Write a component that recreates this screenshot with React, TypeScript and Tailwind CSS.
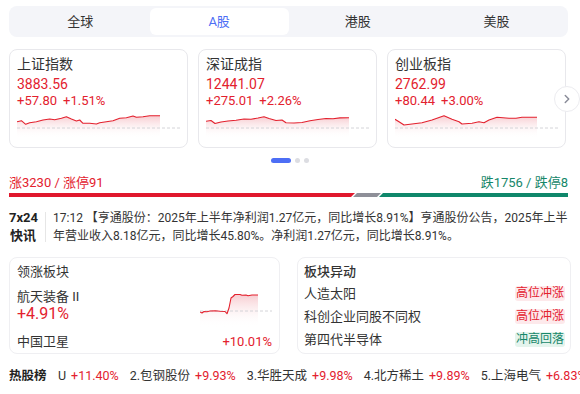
import { useId } from "react";
import { ChevronRight } from "lucide-react";

type Pt = [number, number];

const tabs = ["全球", "A股", "港股", "美股"];

const indices: { name: string; value: string; chg: string; pct: string; pts: Pt[] }[] = [
  {
    name: "上证指数",
    value: "3883.56",
    chg: "+57.80",
    pct: "+1.51%",
    pts: [
      [0, 7.7], [4.4, 6.7], [8.7, 10.3], [12.7, 8.7], [19.4, 7.7], [26, 6], [32.7, 5], [37.7, 5.7],
      [44.4, 4.3], [49.4, 2.7], [54.4, 5], [59.4, 7], [62.7, 6], [66, 9.3], [72.7, 9.3], [79.4, 10],
      [82.7, 8.7], [89.4, 7.7], [96, 6.7], [102.7, 4.3], [109.4, 3.7], [116, 2], [119.4, 3.3],
      [126, 2.7], [132.7, 1.7], [143, 1.7],
    ],
  },
  {
    name: "深证成指",
    value: "12441.07",
    chg: "+275.01",
    pct: "+2.26%",
    pts: [
      [0, 7.3], [5, 6.5], [9, 9.5], [15, 8], [22, 7], [30, 6.3], [38, 5], [45, 5.2], [52, 4],
      [58, 2.8], [63, 4.5], [70, 6.5], [76, 6], [80, 8.8], [88, 9], [96, 8.5], [104, 6.8],
      [112, 5.5], [120, 4.5], [127, 4.8], [134, 3.9], [143, 3.8],
    ],
  },
  {
    name: "创业板指",
    value: "2762.99",
    chg: "+80.44",
    pct: "+3.00%",
    pts: [
      [0, 5.3], [4, 7.7], [9, 11], [17, 10], [27, 8.7], [37, 6], [49, 1.7], [57, 5.3], [64, 7.7],
      [67, 10], [77, 9.3], [84, 7.7], [89, 8.7], [94, 6], [102, 3.3], [114, 4.3], [121, 4.3],
      [127, 3.3], [142, 3.3],
    ],
  },
];

const movers: { name: string; tag: string; up: boolean }[] = [
  { name: "人造太阳", tag: "高位冲涨", up: true },
  { name: "科创企业同股不同权", tag: "高位冲涨", up: true },
  { name: "第四代半导体", tag: "冲高回落", up: false },
];

const hot = [
  { name: "U", pct: "+11.40%" },
  { name: "2.包钢股份", pct: "+9.93%" },
  { name: "3.华胜天成", pct: "+9.98%" },
  { name: "4.北方稀土", pct: "+9.89%" },
  { name: "5.上海电气", pct: "+6.83%" },
];

function Spark({
  pts,
  w,
  h,
  base,
}: {
  pts: Pt[];
  w: number;
  h: number;
  base: number;
}) {
  const id = useId();
  const last = pts[pts.length - 1];
  const line = pts.map((p) => p.join(",")).join(" ");
  const area = `${pts[0][0]},${h} ${line} ${last[0]},${h}`;
  return (
    <svg width={w} height={h} viewBox={`0 0 ${w} ${h}`} className="block">
      <defs>
        <linearGradient id={id} x1="0" y1="0" x2="0" y2="1">
          <stop offset="0%" stopColor="#f6c5ca" stopOpacity="0.9" />
          <stop offset="100%" stopColor="#ffffff" stopOpacity="0" />
        </linearGradient>
      </defs>
      <polygon points={area} fill={`url(#${id})`} />
      <line x1="0" y1={base} x2={w} y2={base} stroke="#d4d4d8" strokeWidth="1" strokeDasharray="3 2" />
      <polyline points={line} fill="none" stroke="#e3212e" strokeWidth="1.1" strokeLinejoin="round" />
    </svg>
  );
}

export default function App() {
  return (
    <div className="h-[394px] w-[580px] overflow-hidden bg-white font-['Roboto','Noto_Sans_CJK_SC',sans-serif] text-[#333]">
      {/* market tabs */}
      <div className="mx-[9px] mt-1.5 flex h-[31px] w-[559px] rounded-lg bg-[#f4f5f9] p-[2px]">
        {tabs.map((t) => (
          <div
            key={t}
            className={
              t === "A股"
                ? "flex flex-1 items-center justify-center rounded-md bg-white text-[13px] text-[#4d6ef5]"
                : "flex flex-1 items-center justify-center text-[13px] text-[#333]"
            }
          >
            {t}
          </div>
        ))}
      </div>

      {/* index cards */}
      <div className="relative mx-[9px] mt-3 flex w-[558px] gap-[10px]">
        {indices.map((c) => (
          <div key={c.name} className="h-[99px] w-[179px] rounded-lg border border-[#e8e8ec] px-[7px] pt-1">
            <div className="text-[14px] leading-5 text-[#333]">{c.name}</div>
            <div className="text-[14px] leading-5 text-[#e3212e]">{c.value}</div>
            <div className="flex gap-1.5 text-[13px] leading-[14px] text-[#e3212e]">
              <span>{c.chg}</span>
              <span>{c.pct}</span>
            </div>
            <div className="mt-[6px]">
              <Spark pts={c.pts} w={164} h={24} base={14} />
            </div>
          </div>
        ))}
        <div className="absolute right-[-13px] top-[37px] flex h-[26px] w-[26px] items-center justify-center rounded-full border border-[#ececf0] bg-white">
          <ChevronRight size={14} strokeWidth={2.5} color="#8a8c99" />
        </div>
      </div>

      {/* pager dots */}
      <div className="mt-[10px] flex items-center justify-center gap-1">
        <span className="h-[5px] w-5 rounded-full bg-[#4d6ef5]" />
        <span className="h-[5px] w-[5px] rounded-full bg-[#dcdde2]" />
        <span className="h-[5px] w-[5px] rounded-full bg-[#dcdde2]" />
      </div>

      {/* up / down breadth */}
      <div className="mx-[9px] mt-3 w-[559px]">
        <div className="flex justify-between text-[13px] leading-4">
          <span className="text-[#e3212e]">涨3230 / 涨停91</span>
          <span className="text-[#16876a]">跌1756 / 跌停8</span>
        </div>
        <div className="mt-[2px] flex h-1">
          <div className="w-[346px] bg-[#e0182d] [clip-path:polygon(0_0,100%_0,calc(100%_-_4px)_100%,0_100%)]" />
          <div className="-ml-[2px] w-[28px] bg-[#8e8f98] [clip-path:polygon(4px_0,100%_0,calc(100%_-_4px)_100%,0_100%)]" />
          <div className="-ml-[2px] flex-1 bg-[#0f876b] [clip-path:polygon(4px_0,100%_0,100%_100%,0_100%)]" />
        </div>
      </div>

      {/* 7x24 news */}
      <div className="mx-[9px] mt-3 flex">
        <div className="w-[28px] text-center text-[13px] font-bold leading-[18px] text-[#222]">
          <div>7x24</div>
          <div>快讯</div>
        </div>
        <div className="ml-2 mt-[3px] h-[30px] border-l border-[#e6e6e6]" />
        <div className="ml-[7px] text-[12px] leading-[18px] text-[#333]">
          <div className="whitespace-nowrap">
            17:12&nbsp;【亨通股份：2025年上半年净利润1.27亿元，同比增长8.91%】亨通股份公告，2025年上半
          </div>
          <div className="whitespace-nowrap">
            年营业收入8.18亿元，同比增长45.80%。净利润1.27亿元，同比增长8.91%。
          </div>
        </div>
      </div>

      {/* sector boxes */}
      <div className="mx-[9px] mt-3 flex gap-[17px]">
        <div className="h-[97px] w-[271px] rounded-lg border border-[#efeff2] px-[7px] pt-1">
          <div className="text-[13px] leading-5">领涨板块</div>
          <div className="mt-[6px] flex justify-between">
            <div>
              <div className="text-[13px] leading-[17px]">航天装备 II</div>
              <div className="text-[16px] leading-[17px] text-[#e3212e]">+4.91%</div>
            </div>
            <div className="mt-[5px]">
              <Spark
                w={72}
                h={34}
                base={18}
                pts={[
                  [0, 19], [2, 20], [4, 18.5], [7, 18.7], [10, 18], [15, 17.7], [20, 18.3], [25, 18.5],
                  [27, 20.7], [29, 15], [31, 5], [33, 3.5], [35, 1.5], [40, 1.5], [42, 2.3], [46, 2],
                  [48, 2.8], [52, 2], [58, 2],
                ]}
              />
            </div>
          </div>
          <div className="mt-[5px] flex justify-between text-[13px] leading-5">
            <span>中国卫星</span>
            <span className="text-[#e3212e]">+10.01%</span>
          </div>
        </div>

        <div className="h-[97px] flex-1 rounded-lg border border-[#efeff2] pl-[6px] pr-[5px] pt-1">
          <div className="text-[13px] font-medium leading-5">板块异动</div>
          {movers.map((m) => (
            <div key={m.name} className="flex items-center justify-between text-[13px] leading-[23px]">
              <span>{m.name}</span>
              <span
                className={
                  m.up
                    ? "rounded-[3px] bg-[#fde9eb] px-px text-[12px] leading-[15px] text-[#e3212e]"
                    : "rounded-[3px] bg-[#e4f4ed] px-px text-[12px] leading-[15px] text-[#16876a]"
                }
              >
                {m.tag}
              </span>
            </div>
          ))}
        </div>
      </div>

      {/* hot stocks */}
      <div className="ml-[9px] mt-3 flex items-center whitespace-nowrap text-[12.5px] leading-5">
        <span className="w-[49px] shrink-0 font-bold text-[#222]">热股榜</span>
        <div className="flex gap-[11px]">
          {hot.map((h) => (
            <span key={h.pct + h.name} className="flex gap-[5px]">
              <span>{h.name}</span>
              <span className="text-[#e3212e]">{h.pct}</span>
            </span>
          ))}
        </div>
      </div>
    </div>
  );
}
